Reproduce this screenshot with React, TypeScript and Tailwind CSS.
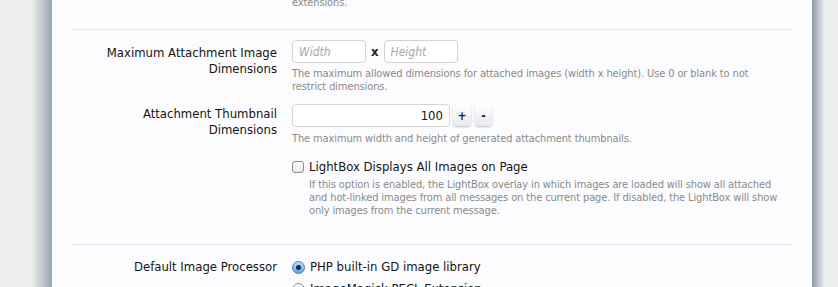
import React from "react";

const font = "font-['DejaVu_Sans_Condensed','DejaVu_Sans',sans-serif]";

const Label: React.FC<{ children: React.ReactNode }> = ({ children }) => (
  <div className="w-[205px] shrink-0 text-right text-[13px] leading-[16px] text-[#141414]">{children}</div>
);

const Hint: React.FC<{ children: React.ReactNode; className?: string }> = ({ children, className }) => (
  <p className={`text-[11px] leading-[13px] tracking-[-0.12px] text-[#8a8a8a] ${className ?? ""}`}>{children}</p>
);

const App: React.FC = () => {
  return (
    <div className={`flex h-[287px] w-[838px] overflow-hidden bg-[#f0f0f0] ${font}`}>
      <div className="w-[52px] shrink-0 bg-gradient-to-r from-[#efefef] from-60% to-[#9aa6b0]" />
      <div className="w-[760px] shrink-0 bg-[#fcfcfe] px-5">
        <div className="-mt-[4px] flex gap-[15px]">
          <div className="w-[205px] shrink-0" />
          <Hint>extensions.</Hint>
        </div>

        <div className="mt-[20px] border-t border-[#dde9ee]" />

        <div className="mt-[10px] flex gap-[15px]">
          <div className="pt-[5px]">
            <Label>
              Maximum Attachment Image
              <br />
              Dimensions
            </Label>
          </div>
          <div className="flex flex-col">
            <div className="flex items-center gap-[5px]">
              <input
                placeholder="Width"
                className="h-[23px] w-[74px] rounded-[4px] border border-[#d4d4d4] bg-white px-[6px] text-[12px] italic placeholder:text-[#a8a8a8] outline-none"
              />
              <span className="text-[13px] font-bold text-[#222]">x</span>
              <input
                placeholder="Height"
                className="h-[23px] w-[74px] rounded-[4px] border border-[#d4d4d4] bg-white px-[6px] text-[12px] italic placeholder:text-[#a8a8a8] outline-none"
              />
            </div>
            <Hint className="mt-[4px] w-[470px]">
              The maximum allowed dimensions for attached images (width x height). Use 0 or blank to not restrict dimensions.
            </Hint>
          </div>
        </div>

        <div className="mt-[11px] flex gap-[15px]">
          <div className="pt-[2px]">
            <Label>
              Attachment Thumbnail
              <br />
              Dimensions
            </Label>
          </div>
          <div className="flex flex-col">
            <div className="flex items-center gap-[3px]">
              <input
                defaultValue="100"
                className="h-[23px] w-[158px] rounded-[4px] border border-[#d4d4d4] bg-white px-[6px] text-right text-[13px] text-[#141414] outline-none"
              />
              <button className="h-[21px] w-[18px] rounded-[4px] bg-gradient-to-b from-white to-[#e6e9ee] text-[12px] font-bold leading-none text-[#222] shadow-[0_1px_2px_rgba(0,0,0,0.25)]">
                +
              </button>
              <button className="ml-[1px] h-[21px] w-[17px] rounded-[4px] bg-gradient-to-b from-white to-[#e6e9ee] text-[12px] font-bold leading-none text-[#222] shadow-[0_1px_2px_rgba(0,0,0,0.25)]">
                -
              </button>
            </div>
            <Hint className="mt-[5px]">The maximum width and height of generated attachment thumbnails.</Hint>

            <label className="mt-[14px] flex items-center gap-[5px] text-[13px] leading-[16px] text-[#141414]">
              <span className="h-[12px] w-[12px] rounded-[3px] border border-[#8e8e8e] bg-gradient-to-b from-white to-[#e8e8e8]" />
              LightBox Displays All Images on Page
            </label>
            <Hint className="mt-[3px] ml-[17px] w-[482px]">
              If this option is enabled, the LightBox overlay in which images are loaded will show all attached and hot-linked images from all messages on the current page. If disabled, the LightBox will show only images from the current message.
            </Hint>
          </div>
        </div>

        <div className="mt-[27px] border-t border-[#dde9ee]" />

        <div className="mt-[14px] flex gap-[15px]">
          <Label>Default Image Processor</Label>
          <div className="flex flex-col gap-[6px] text-[13px] leading-[16px] text-[#141414]">
            <label className="flex items-center gap-[5px]">
              <span className="flex h-[13px] w-[13px] items-center justify-center rounded-full border border-[#3f7fbf] bg-gradient-to-b from-[#bfe0fb] to-[#5ba4e6]">
                <span className="h-[5px] w-[5px] rounded-full bg-[#1a2a3a]" />
              </span>
              PHP built-in GD image library
            </label>
            <label className="flex items-center gap-[5px]">
              <span className="h-[13px] w-[13px] rounded-full border border-[#8e8e8e] bg-gradient-to-b from-white to-[#e8e8e8]" />
              ImageMagick PECL Extension
            </label>
          </div>
        </div>
      </div>
      <div className="w-[26px] shrink-0 bg-gradient-to-r from-[#8f9aa5] to-[#efefef] to-50%" />
    </div>
  );
};

export default App;
